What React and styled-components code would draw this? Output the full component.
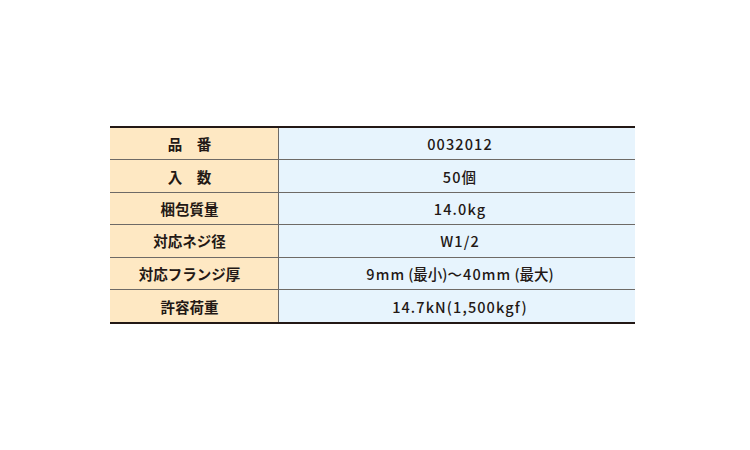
import React from "react";
import styled, { createGlobalStyle } from "styled-components";

const GlobalStyle = createGlobalStyle`
  html, body { margin: 0; padding: 0; background: #ffffff; }
  body { font-family: "Noto Sans CJK JP", "Noto Sans", sans-serif; }
`;

const Page = styled.div`
  width: 750px;
  height: 450px;
  display: flex;
  align-items: flex-start;
  justify-content: flex-start;
  padding: 126px 0 0 110px;
  box-sizing: border-box;
`;

const Table = styled.div`
  width: 525px;
  display: flex;
  flex-direction: column;
  border-top: 2px solid #231815;
  border-bottom: 2px solid #231815;
`;

const Row = styled.div`
  display: grid;
  grid-template-columns: 169px 1fr;
  height: 32.4px;
  box-sizing: border-box;
  border-bottom: ${(p) => (p.$last ? "none" : "1px solid #6e6a66")};
`;

const Label = styled.div`
  background: #fee8c3;
  border-right: 1px solid #6e6a66;
  display: flex;
  align-items: center;
  justify-content: center;
  padding-right: 9px;
  font-family: "Noto Sans CJK JP", sans-serif;
  font-weight: 700;
  font-size: 14.5px;
  color: #231815;
  white-space: pre;
`;

const Value = styled.div`
  background: #e7f4fd;
  display: flex;
  align-items: center;
  justify-content: center;
  padding-left: 6px;
  font-family: "Noto Sans CJK JP", sans-serif;
  font-weight: 500;
  font-size: 14.5px;
  letter-spacing: 1.1px;
  color: #231815;
  white-space: pre;
`;

const Paren = styled.span`
  letter-spacing: 0;
  margin: ${(p) => p.$m || "0"};
`;

const rows = [
  ["品　番", "0032012"],
  ["入　数", "50個"],
  ["梱包質量", "14.0kg"],
  ["対応ネジ径", "W1/2"],
  [
    "対応フランジ厚",
    <>
      9mm<Paren $m="0 0 0 3px">(最小)</Paren>～40mm<Paren $m="0 0 0 3px">(最大)</Paren>
    </>,
  ],
  ["許容荷重", "14.7kN(1,500kgf)"],
];

export default function App() {
  return (
    <>
      <GlobalStyle />
      <Page>
        <Table>
          {rows.map(([l, v], i) => (
            <Row key={l} $last={i === rows.length - 1}>
              <Label>{l}</Label>
              <Value>{v}</Value>
            </Row>
          ))}
        </Table>
      </Page>
    </>
  );
}
